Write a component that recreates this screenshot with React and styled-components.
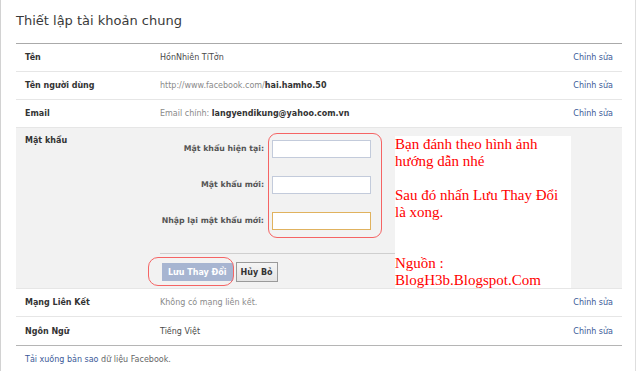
import React from 'react';
import styled, { createGlobalStyle } from 'styled-components';

const GlobalStyle = createGlobalStyle`
  html, body {
    margin: 0;
    padding: 0;
    background: #ffffff;
  }
  body {
    font-family: "DejaVu Sans", Tahoma, sans-serif;
    font-size: 8px;
    color: #333333;
    overflow: hidden;
  }
`;

const Page = styled.div`
  display: flex;
  width: 640px;
  height: 371px;
  background: #ffffff;
`;

const Panel = styled.main`
  box-sizing: border-box;
  width: 636px;
  height: 371px;
  padding: 0 13px 0 15px;
  border-left: 1px solid #d2d2d2;
  border-right: 1px solid #dedede;
`;

const Title = styled.h1`
  box-sizing: border-box;
  height: 44px;
  margin: 0;
  padding: 12px 0 0 0;
  font-size: 13px;
  line-height: 18px;
  font-weight: normal;
  color: #3a3a3a;
  border-bottom: 1px solid #aaaaaa;
`;

const List = styled.section`
  display: flex;
  flex-direction: column;
  border-bottom: 1px solid #b5b5b5;
`;

const Row = styled.div`
  box-sizing: border-box;
  display: grid;
  grid-template-columns: 135px 1fr auto;
  align-items: center;
  height: 28px;
  padding: 0 9px;
  border-bottom: ${(p) => (p.last ? 'none' : '1px solid #e6e6e6')};
`;

const Label = styled.span`
  font-weight: bold;
  color: #333333;
`;

const Value = styled.span`
  color: ${(p) => (p.muted ? '#8a8a8a' : '#4a4a4a')};

  b {
    color: #333333;
  }
`;

const EditLink = styled.a`
  color: #3b5998;
  text-decoration: none;
`;

const PasswordBlock = styled.div`
  box-sizing: border-box;
  display: flex;
  height: 161px;
  background: #f2f2f2;
  border-bottom: 1px solid #e6e6e6;
`;

const PasswordLabel = styled.div`
  box-sizing: border-box;
  width: 144px;
  padding: 8px 0 0 9px;
  font-weight: bold;
`;

const FormColumn = styled.div`
  box-sizing: border-box;
  width: 235px;
  padding-top: 5px;
  display: flex;
  flex-direction: column;
`;

const Fields = styled.div`
  display: flex;
  gap: 4px;
`;

const FieldLabels = styled.div`
  width: 104px;
  padding-top: 7px;
  display: flex;
  flex-direction: column;
  align-items: flex-end;
  gap: 18px;

  span {
    height: 18px;
    line-height: 18px;
    font-size: 7.8px;
    font-weight: bold;
    color: #555555;
    white-space: nowrap;
  }
`;

const InputFrame = styled.div`
  box-sizing: border-box;
  width: 114px;
  height: 105px;
  padding: 6px 0 0 3px;
  border: 1px solid #f56464;
  border-radius: 9px;
  display: flex;
  flex-direction: column;
  gap: 18px;
`;

const Field = styled.input`
  box-sizing: border-box;
  width: 99px;
  height: 18px;
  margin: 0;
  padding: 0 3px;
  background: #ffffff;
  border: 1px solid ${(p) => (p.focused ? '#e0b25e' : '#c3cbdb')};
  outline: none;
`;

const ButtonBar = styled.div`
  display: flex;
  gap: 3px;
  margin-top: 15px;
  padding: 8px 0 0 2px;
  border-top: 1px solid #cfcfcf;
`;

const Highlight = styled.span`
  position: relative;
  display: inline-flex;

  &::after {
    content: '';
    position: absolute;
    top: -5px;
    bottom: -4px;
    left: -14px;
    right: -1px;
    border: 1px solid #f56464;
    border-radius: 10px;
  }
`;

const Button = styled.button`
  box-sizing: border-box;
  height: ${(p) => (p.primary ? '18px' : '20px')};
  margin: 0;
  padding: 0 ${(p) => (p.primary ? '5px' : '4px')};
  font-family: "DejaVu Sans", Tahoma, sans-serif;
  font-size: 8px;
  font-weight: bold;
  color: ${(p) => (p.primary ? '#ffffff' : '#333333')};
  background: ${(p) =>
    p.primary ? '#a7b5d1' : 'linear-gradient(#f5f5f5, #e4e4e4)'};
  border: 1px solid ${(p) => (p.primary ? '#a7b5d1' : '#9a9a9a')};
  align-self: ${(p) => (p.primary ? 'flex-start' : 'auto')};
  margin-top: ${(p) => (p.primary ? '1px' : '0')};
`;

const Note = styled.div`
  width: 176px;
  margin-top: 8px;
  background: #ffffff;
  font-family: "Liberation Serif", "Times New Roman", serif;
  font-size: 15px;
  line-height: 17px;
  color: #ff0000;
  white-space: nowrap;

  p {
    margin: 0;
    min-height: 17px;
  }
`;

const Footer = styled.footer`
  padding: 8px 0 0 9px;
  line-height: 12px;
  color: #666666;
`;

const FooterLink = styled.a`
  color: #3b5998;
  text-decoration: none;
`;

const rows = [
  { label: 'Tên', value: 'HồnNhiên TíTởn' },
  {
    label: 'Tên người dùng',
    value: (
      <>
        http://www.facebook.com/<b>hai.hamho.50</b>
      </>
    ),
    muted: true,
  },
  {
    label: 'Email',
    value: (
      <>
        Email chính: <b>langyendikung@yahoo.com.vn</b>
      </>
    ),
    muted: true,
  },
];

const noteLines = [
  'Bạn đánh theo hình ảnh',
  'hướng dẫn nhé',
  '',
  'Sau đó nhấn Lưu Thay Đổi',
  'là xong.',
  '',
  '',
  'Nguồn :',
  'BlogH3b.Blogspot.Com',
];

export default function App() {
  return (
    <Page>
      <GlobalStyle />
      <Panel>
        <Title>Thiết lập tài khoản chung</Title>
        <List>
          {rows.map((r) => (
            <Row key={r.label}>
              <Label>{r.label}</Label>
              <Value muted={r.muted}>{r.value}</Value>
              <EditLink>Chỉnh sửa</EditLink>
            </Row>
          ))}
          <PasswordBlock>
            <PasswordLabel>Mật khẩu</PasswordLabel>
            <FormColumn>
              <Fields>
                <FieldLabels>
                  <span>Mật khẩu hiện tại:</span>
                  <span>Mật khẩu mới:</span>
                  <span>Nhập lại mật khẩu mới:</span>
                </FieldLabels>
                <InputFrame>
                  <Field type="password" />
                  <Field type="password" />
                  <Field type="password" focused />
                </InputFrame>
              </Fields>
              <ButtonBar>
                <Highlight>
                  <Button primary>Lưu Thay Đổi</Button>
                </Highlight>
                <Button>Hủy Bỏ</Button>
              </ButtonBar>
            </FormColumn>
            <Note>
              {noteLines.map((line, i) => (
                <p key={i}>{line}</p>
              ))}
            </Note>
          </PasswordBlock>
          <Row>
            <Label>Mạng Liên Kết</Label>
            <Value muted>Không có mạng liên kết.</Value>
            <EditLink>Chỉnh sửa</EditLink>
          </Row>
          <Row last>
            <Label>Ngôn Ngữ</Label>
            <Value>Tiếng Việt</Value>
            <EditLink>Chỉnh sửa</EditLink>
          </Row>
        </List>
        <Footer>
          <FooterLink>Tải xuống bản sao</FooterLink> dữ liệu Facebook.
        </Footer>
      </Panel>
    </Page>
  );
}
